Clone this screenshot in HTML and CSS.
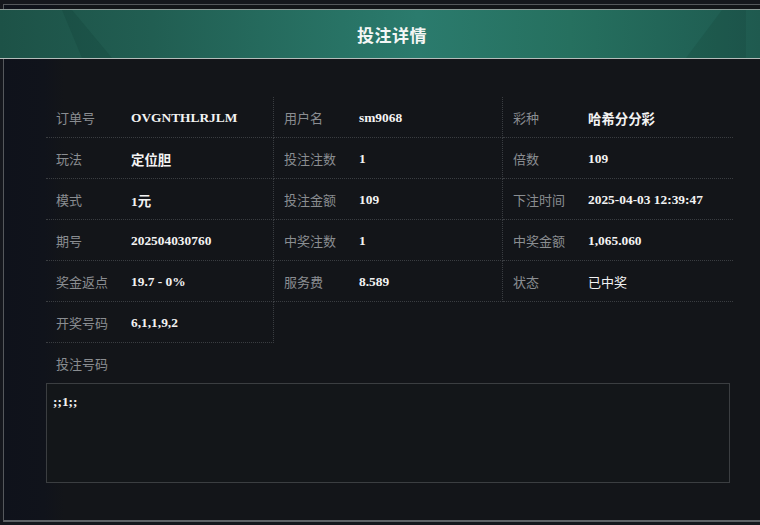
FILE: index.html
```html
<!DOCTYPE html>
<html lang="zh-CN">

<head>
    <meta charset="UTF-8">
    <title>投注详情</title>
    <link rel="stylesheet" href="styles.css">
</head>

<body>

    <div class="frame">
        <div class="header">
            <h1>投注详情</h1>
        </div>

        <div class="panel">
            <div class="info-grid">
                <div class="cell"><span class="label">订单号</span><span class="value">OVGNTHLRJLM</span></div>
                <div class="cell"><span class="label">用户名</span><span class="value">sm9068</span></div>
                <div class="cell"><span class="label">彩种</span><span class="value">哈希分分彩</span></div>

                <div class="cell"><span class="label">玩法</span><span class="value">定位胆</span></div>
                <div class="cell"><span class="label">投注注数</span><span class="value">1</span></div>
                <div class="cell"><span class="label">倍数</span><span class="value">109</span></div>

                <div class="cell"><span class="label">模式</span><span class="value">1元</span></div>
                <div class="cell"><span class="label">投注金额</span><span class="value">109</span></div>
                <div class="cell"><span class="label">下注时间</span><span class="value">2025-04-03 12:39:47</span></div>

                <div class="cell"><span class="label">期号</span><span class="value">202504030760</span></div>
                <div class="cell"><span class="label">中奖注数</span><span class="value">1</span></div>
                <div class="cell"><span class="label">中奖金额</span><span class="value">1,065.060</span></div>

                <div class="cell"><span class="label">奖金返点</span><span class="value">19.7 - 0%</span></div>
                <div class="cell"><span class="label">服务费</span><span class="value">8.589</span></div>
                <div class="cell"><span class="label">状态</span><span class="value plain">已中奖</span></div>

                <div class="cell"><span class="label">开奖号码</span><span class="value">6,1,1,9,2</span></div>
            </div>

            <div class="bet-label">投注号码</div>
            <div class="bet-box">;;1;;</div>
        </div>
    </div>

</body>

</html>
```

FILE: styles.css
```css
body {
    margin: 0;
    background: #15171d;
    font-family: "Noto Sans CJK SC", "Noto Sans", sans-serif;
    overflow: hidden;
}

.frame {
    margin: 4px 0 0 3px;
    border-top: 1px solid #55585c;
    border-left: 1px solid #55585c;
    border-bottom: 2px solid #5f6266;
    padding-top: 4px;
    background: linear-gradient(90deg, #0f121b 0, #10131b 40px, #131519 60px, #131519 100%);
}

.header {
    position: relative;
    margin-left: -4px;
    height: 48px;
    border-top: 1px solid #8c9a97;
    border-bottom: 1px solid #b4bcba;
    background: linear-gradient(90deg, #1d5247 0%, #215e52 20%, #287365 45%, #2b7b6d 55%, #26705f 75%, #216356 90%, #1f5a4f 100%);
    display: flex;
    align-items: center;
    justify-content: center;
    padding-left: 24px;
    overflow: hidden;
}

.header::before {
    content: "";
    position: absolute;
    left: 62px;
    top: 0;
    width: 50px;
    height: 48px;
    background: rgba(10, 40, 32, 0.14);
    clip-path: polygon(0 0, 20% 0, 100% 100%, 40% 100%);
}

.header::after {
    content: "";
    position: absolute;
    right: 14px;
    top: 0;
    width: 60px;
    height: 48px;
    background: rgba(10, 40, 32, 0.12);
    clip-path: polygon(60% 0, 100% 0, 100% 100%, 0 100%);
}

.header h1 {
    margin: 0;
    color: #f4f6f5;
    font-size: 17px;
    font-weight: bold;
    letter-spacing: 0.5px;
}

.panel {
    padding: 38px 0 37px 42px;
}

.info-grid {
    display: grid;
    grid-template-columns: 228px 229px 230px;
}

.cell {
    display: flex;
    align-items: center;
    height: 40px;
    border-bottom: 1px dotted #3a3d41;
    border-right: 1px dotted #3a3d41;
    padding-left: 10px;
}

.cell:nth-child(3n) {
    border-right: none;
}

.label {
    width: 75px;
    color: #8a8d91;
    font-size: 13px;
}

.value {
    color: #f3f3f3;
    font-family: "Liberation Serif", "Noto Sans CJK SC", serif;
    font-weight: bold;
    font-size: 13.4px;
    padding-top: 2px;
}

.value.plain {
    font-family: "Noto Sans CJK SC", sans-serif;
    font-weight: normal;
    font-size: 13px;
    padding-top: 0;
}

.bet-label {
    height: 40px;
    display: flex;
    align-items: center;
    padding-left: 10px;
    color: #8a8d91;
    font-size: 13px;
}

.bet-box {
    width: 670px;
    height: 82px;
    border: 1px solid #3b3e41;
    background: #131619;
    padding: 10px 6px 6px 6px;
    color: #f3f3f3;
    font-family: "Liberation Serif", serif;
    font-weight: bold;
    font-size: 13.4px;
}
```
